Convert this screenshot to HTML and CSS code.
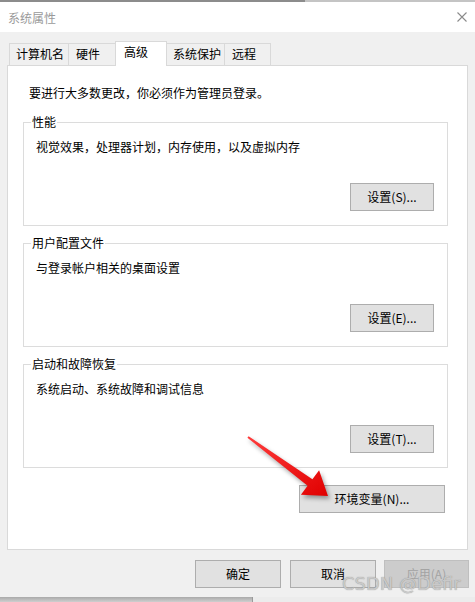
FILE: index.html
```html
<!DOCTYPE html>
<html lang="zh-CN">
<head>
<meta charset="utf-8">
<title>系统属性</title>
<link rel="stylesheet" href="styles.css">
</head>
<body>
<div class="window">
  <div class="topline"></div>
  <div class="titlebar">
    <span class="title">系统属性</span>
    <svg class="close" width="12" height="12" viewBox="0 0 12 12"><path d="M1.5 1.5 L10.5 10.5 M10.5 1.5 L1.5 10.5" stroke="#8a8a8a" stroke-width="1.1" fill="none"/></svg>
  </div>
  <div class="content">
    <div class="tabs">
      <div class="tab t1">计算机名</div>
      <div class="tab t2">硬件</div>
      <div class="tab t3 selected">高级</div>
      <div class="tab t4">系统保护</div>
      <div class="tab t5">远程</div>
    </div>
    <div class="panel">
      <p class="intro">要进行大多数更改，你必须作为管理员登录。</p>
      <fieldset class="group">
        <legend>性能</legend>
        <p class="desc">视觉效果，处理器计划，内存使用，以及虚拟内存</p>
        <div class="btn-row"><button class="btn">设置(S)...</button></div>
      </fieldset>
      <fieldset class="group">
        <legend>用户配置文件</legend>
        <p class="desc">与登录帐户相关的桌面设置</p>
        <div class="btn-row"><button class="btn">设置(E)...</button></div>
      </fieldset>
      <fieldset class="group">
        <legend>启动和故障恢复</legend>
        <p class="desc">系统启动、系统故障和调试信息</p>
        <div class="btn-row"><button class="btn">设置(T)...</button></div>
      </fieldset>
      <div class="env-row"><button class="btn env">环境变量(N)...</button></div>
    </div>
    <div class="footer">
      <button class="btn foot ok">确定</button>
      <button class="btn foot cancel">取消</button>
      <button class="btn foot disabled">应用(A)</button>
    </div>
  </div>
  <div class="bottomstrip"><div class="bs-left"></div><div class="bs-right"></div></div>
  <svg class="arrow" width="475" height="602" viewBox="0 0 475 602">
    <defs>
      <linearGradient id="ag" x1="0" y1="0" x2="1" y2="1">
        <stop offset="0" stop-color="#ff3b3b"/>
        <stop offset="1" stop-color="#e00000"/>
      </linearGradient>
    </defs>
    <polygon points="248.6,436.2 312.4,479.3 319.1,470.2 328,496 300.9,494.8 307.6,485.7 247.4,437.8" fill="url(#ag)"/>
  </svg>
  <div class="watermark">CSDN @Defir</div>
</div>
</body>
</html>
```
FILE: styles.css
```css
html, body {
  margin: 0;
  padding: 0;
}
body {
  width: 475px;
  height: 602px;
  overflow: hidden;
  background: #f0f0f0;
  font-family: "Noto Sans CJK SC", "Noto Sans", sans-serif;
  font-size: 12px;
  color: #000;
}
.window {
  position: relative;
  width: 475px;
  height: 602px;
  display: flex;
  flex-direction: column;
}
.topline {
  height: 2px;
  background: linear-gradient(to right, #8c8c8c 0, #8c8c8c 305px, #c4c4c4 305px);
}
.titlebar {
  height: 30px;
  background: #fff;
  display: flex;
  align-items: center;
  justify-content: space-between;
  padding: 1px 7px 0 8px;
  box-sizing: border-box;
}
.title {
  color: #9a9a9a;
  line-height: 16px;
}
.close {
  display: block;
  margin-top: -2px;
}
.content {
  flex: 1;
  padding: 9px 0 0 7px;
  display: flex;
  flex-direction: column;
}
.tabs {
  display: flex;
  align-items: flex-end;
  margin-left: 2px;
  height: 24px;
  position: relative;
  z-index: 1;
}
.tab {
  box-sizing: border-box;
  height: 22px;
  border: 1px solid #d9d9d9;
  border-bottom: none;
  background: #f0f0f0;
  padding: 2px 0 0 6px;
  line-height: 16px;
  margin-left: -1px;
  white-space: nowrap;
}
.t1 { width: 60px; margin-left: 0; }
.t2 { width: 48px; padding-left: 7px; }
.t3 { width: 52px; }
.t4 { width: 59px; }
.t5 { width: 47px; padding-left: 7px; }
.tab.selected {
  height: 25px;
  background: #fff;
  margin-bottom: -1px;
  padding-left: 8px;
  position: relative;
  z-index: 2;
}
.panel {
  box-sizing: border-box;
  width: 461px;
  height: 485px;
  background: #fff;
  border: 1px solid #d9d9d9;
  padding: 19px 19px 0 15px;
  display: flex;
  flex-direction: column;
}
.intro {
  margin: 0 0 13px 6px;
  line-height: 16px;
}
.group {
  margin: 0 0 9px 0;
  border: 1px solid #dcdcdc;
  padding: 9px 13px 14px 7px;
  min-width: 0;
}
.group legend {
  padding: 0 1px;
  line-height: 16px;
}
.desc {
  margin: 0 0 0 5px;
  line-height: 16px;
}
.btn-row {
  display: flex;
  justify-content: flex-end;
  margin-top: 28px;
}
.btn {
  box-sizing: border-box;
  height: 28px;
  width: 84px;
  background: #e1e1e1;
  border: 1px solid #adadad;
  font-family: "Noto Sans CJK SC", "Noto Sans", sans-serif;
  font-size: 12px;
  color: #000;
  padding: 0;
  line-height: 16px;
  border-radius: 0;
}
.env-row {
  display: flex;
  justify-content: flex-end;
  margin-top: 8px;
  margin-right: 3px;
}
.btn.env {
  width: 146px;
}
.footer {
  display: flex;
  justify-content: flex-end;
  margin-top: 10px;
  padding-right: 6px;
}
.btn.foot {
  width: 86px;
}
.btn.ok {
  margin-right: 9px;
}
.btn.cancel {
  margin-right: 8px;
}
.btn.disabled {
  width: 85px;
  background: #cccccc;
  border-color: #bfbfbf;
  color: #a3a3a3;
}
.bottomstrip {
  height: 5px;
  display: flex;
}
.bs-left {
  width: 252px;
  background: linear-gradient(#a9a9a9, #cfcfcf);
}
.bs-right {
  flex: 1;
  background: #ececec;
  border-left: 1px solid #9a9a9a;
}
.arrow {
  position: absolute;
  left: 0;
  top: 0;
  pointer-events: none;
  filter: drop-shadow(2px 3px 2px rgba(0, 0, 0, 0.35));
}
.watermark {
  position: absolute;
  left: 342px;
  top: 572px;
  font-family: "DejaVu Sans", "Noto Sans", sans-serif;
  font-size: 18px;
  line-height: 24px;
  color: rgba(205, 205, 205, 0.95);
  text-shadow: 0 0 1px rgba(110, 110, 110, 0.75);
  white-space: nowrap;
  pointer-events: none;
}
```
